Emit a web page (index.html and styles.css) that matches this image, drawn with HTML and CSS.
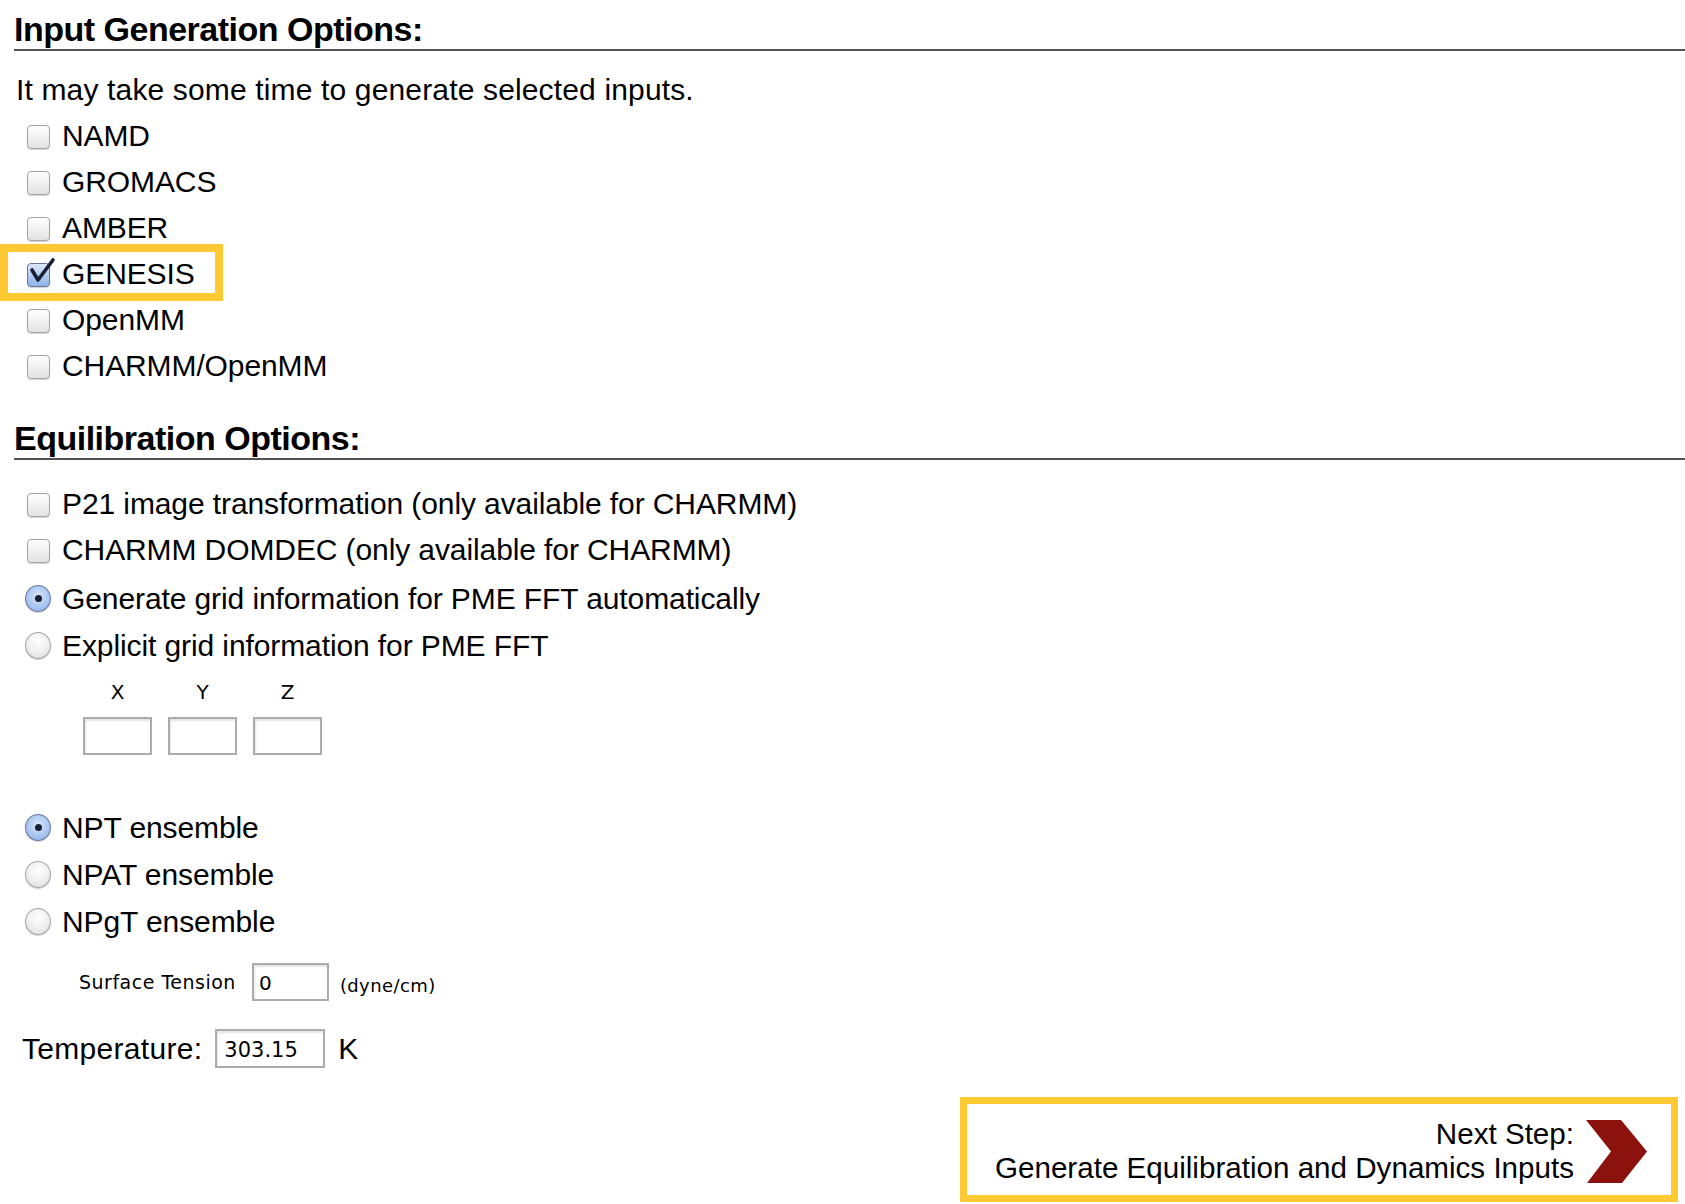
FILE: index.html
```html
<!DOCTYPE html>
<html>
<head>
<meta charset="utf-8">
<title>Input Generation Options</title>
<link rel="stylesheet" href="styles.css">
</head>
<body>
<div class="page">
  <h2 class="section-title">Input Generation Options:</h2>
  <div class="intro">It may take some time to generate selected inputs.</div>
  <div class="options">
    <div class="opt"><span class="slot"><span class="cb"></span></span><span class="lbl">NAMD</span></div>
    <div class="opt"><span class="slot"><span class="cb"></span></span><span class="lbl">GROMACS</span></div>
    <div class="opt"><span class="slot"><span class="cb"></span></span><span class="lbl">AMBER</span></div>
    <div class="opt highlight"><span class="slot"><span class="cb checked"><svg class="tick" viewBox="0 0 30 32" width="30" height="32"><path d="M4 15 L10 25 L25 5" fill="none" stroke="#1a2034" stroke-width="3.6" stroke-linecap="round" stroke-linejoin="round"/></svg></span></span><span class="lbl">GENESIS</span></div>
    <div class="opt"><span class="slot"><span class="cb"></span></span><span class="lbl">OpenMM</span></div>
    <div class="opt"><span class="slot"><span class="cb"></span></span><span class="lbl">CHARMM/OpenMM</span></div>
  </div>

  <h2 class="section-title second">Equilibration Options:</h2>
  <div class="eq">
    <div class="opt"><span class="slot"><span class="cb"></span></span><span class="lbl">P21 image transformation (only available for CHARMM)</span></div>
    <div class="opt"><span class="slot"><span class="cb"></span></span><span class="lbl">CHARMM DOMDEC (only available for CHARMM)</span></div>
    <div class="opt radio-row first-radio"><span class="slot"><span class="rb on"></span></span><span class="lbl">Generate grid information for PME FFT automatically</span></div>
    <div class="opt radio-row"><span class="slot"><span class="rb"></span></span><span class="lbl">Explicit grid information for PME FFT</span></div>
  </div>

  <div class="grid-box">
    <span class="axis">X</span><span class="axis">Y</span><span class="axis">Z</span>
    <input class="field small" type="text" value="">
    <input class="field small" type="text" value="">
    <input class="field small" type="text" value="">
  </div>

  <div class="ensembles">
    <div class="opt radio-row"><span class="slot"><span class="rb on"></span></span><span class="lbl">NPT ensemble</span></div>
    <div class="opt radio-row"><span class="slot"><span class="rb"></span></span><span class="lbl">NPAT ensemble</span></div>
    <div class="opt radio-row"><span class="slot"><span class="rb"></span></span><span class="lbl">NPgT ensemble</span></div>
  </div>

  <div class="tension">
    <span class="tension-lbl">Surface Tension</span>
    <input class="field st" type="text" value="0">
    <span class="unit">(dyne/cm)</span>
  </div>

  <div class="temp">
    <span class="temp-lbl">Temperature:</span>
    <input class="field tf" type="text" value="303.15">
    <span class="temp-unit">K</span>
  </div>

  <div class="next-wrap">
    <div class="next">
      <div class="next-text">
        <div>Next Step:</div>
        <div>Generate Equilibration and Dynamics Inputs</div>
      </div>
      <svg class="chev" viewBox="0 0 61 63" width="61" height="63"><polygon points="0,0 35,0 61,31.5 36,63 1,63 25,31.5" fill="#8c130d"/></svg>
    </div>
  </div>
</div>
</body>
</html>
```

FILE: styles.css
```css
html, body {
  margin: 0;
  padding: 0;
  background: #fff;
}
body {
  font-family: "Liberation Sans", Arial, Helvetica, sans-serif;
  color: #000;
  font-size: 30px;
}
.page {
  padding: 10px 0 0 14px;
}
.section-title {
  margin: 0;
  font-size: 34px;
  font-weight: bold;
  letter-spacing: -0.5px;
  line-height: 39px;
  border-bottom: 2px solid #525252;
}
.section-title.second {
  margin-top: 30px;
}
.intro {
  margin-top: 16px;
  margin-left: 2px;
  line-height: 46px;
  height: 46px;
  letter-spacing: 0.15px;
}
.opt {
  display: flex;
  align-items: center;
  height: 46px;
  line-height: 46px;
}
.opt.radio-row {
  height: 47px;
  line-height: 47px;
}
.opt.first-radio {
  margin-top: 2px;
}
.slot {
  width: 26px;
  margin-left: 11px;
  margin-right: 11px;
  display: flex;
  justify-content: center;
  align-items: center;
  flex: none;
}
.lbl {
  white-space: nowrap;
  letter-spacing: -0.1px;
}
.cb {
  position: relative;
  width: 21px;
  height: 22px;
  border: 1px solid #a3a3a3;
  border-radius: 4px;
  background: linear-gradient(#ffffff, #f1f1f1 50%, #e2e2e2);
  box-shadow: 0 1px 1px rgba(0,0,0,0.18);
  margin-top: 2px;
}
.cb.checked {
  border-color: #6672a0;
  background: linear-gradient(#dce8fb, #b4cdf3 50%, #8fb3ea);
}
.tick {
  position: absolute;
  left: 0;
  top: -9px;
}
.rb {
  position: relative;
  width: 25px;
  height: 25px;
  border: 1px solid #a5a5a5;
  border-radius: 50%;
  background: radial-gradient(circle at 50% 35%, #ffffff, #f0f0f0 50%, #d9d9d9);
  box-shadow: 0 1px 1px rgba(0,0,0,0.18);
}
.rb.on {
  border-color: #6a78a6;
  background: radial-gradient(circle at 50% 40%, #d9e7fb, #aac7f1 55%, #86ace6);
}
.rb.on::after {
  content: "";
  position: absolute;
  left: 9px;
  top: 9px;
  width: 7px;
  height: 7px;
  border-radius: 50%;
  background: #1a1f2c;
}
.highlight {
  position: relative;
}
.highlight::after {
  content: "";
  position: absolute;
  left: -14px;
  top: -7px;
  width: 207px;
  height: 41px;
  border: 8px solid #fec933;
  pointer-events: none;
}
.eq {
  margin-top: 21px;
}
.grid-box {
  margin-top: 11px;
  margin-left: 69px;
  display: grid;
  grid-template-columns: repeat(3, 69px);
  column-gap: 16px;
  row-gap: 13px;
}
.axis {
  font-family: "DejaVu Sans", Verdana, sans-serif;
  font-size: 20px;
  line-height: 24px;
  text-align: center;
}
.field {
  box-sizing: border-box;
  border: 2px solid #ababab;
  background: #fff;
  box-shadow: inset 1px 2px 2px #e4e4e4;
  font-family: "DejaVu Sans", Verdana, sans-serif;
  color: #000;
  margin: 0;
  outline: none;
}
.field.small {
  width: 69px;
  height: 38px;
}
.ensembles {
  margin-top: 49px;
}
.tension {
  margin-top: 18px;
  display: flex;
  align-items: center;
  height: 38px;
  margin-left: 65px;
}
.tension-lbl {
  font-family: "DejaVu Sans", Verdana, sans-serif;
  font-size: 19px;
  letter-spacing: 0.5px;
  margin-right: 16px;
}
.field.st {
  width: 77px;
  height: 38px;
  font-size: 20px;
  padding: 2px 0 0 5px;
}
.unit {
  font-family: "DejaVu Sans", Verdana, sans-serif;
  font-size: 18px;
  letter-spacing: 0.4px;
  margin-left: 11px;
  margin-top: 6px;
}
.temp {
  margin-top: 28px;
  margin-left: 8px;
  display: flex;
  align-items: center;
  height: 39px;
}
.temp-lbl {
  margin-right: 13px;
  letter-spacing: 0.3px;
}
.field.tf {
  width: 110px;
  height: 39px;
  font-size: 21px;
  padding: 3px 0 0 7px;
}
.temp-unit {
  margin-left: 13px;
}
.next-wrap {
  margin-top: 29px;
  display: flex;
  justify-content: flex-end;
  padding-right: 7px;
}
.next {
  display: flex;
  align-items: center;
  border: 7px solid #fec933;
  padding: 13px 24px 10px 28px;
  background: #fff;
}
.next-text {
  text-align: right;
  font-size: 29.6px;
  line-height: 34px;
  white-space: nowrap;
}
.chev {
  margin-left: 12px;
  display: block;
  flex: none;
}
```
